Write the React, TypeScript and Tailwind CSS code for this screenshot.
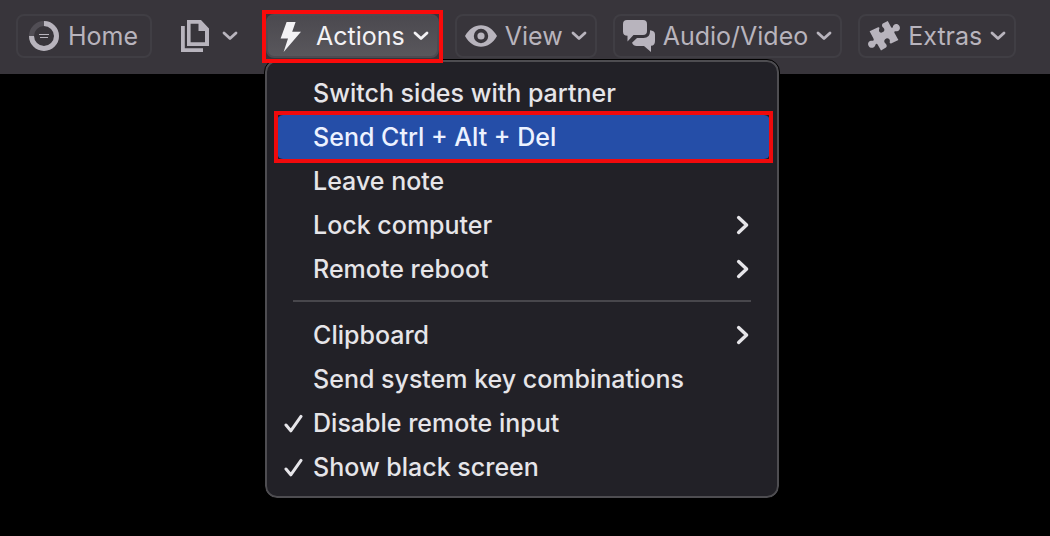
import { useState, type ReactNode } from "react";

function ChevronDown() {
  return (
    <svg viewBox="0 0 16 10" className="w-4 h-[10px] shrink-0" fill="none" stroke="currentColor" strokeWidth="2.8" strokeLinecap="round" strokeLinejoin="round">
      <path d="M2 2 L8 7.6 L14 2" />
    </svg>
  );
}

function ChevronRight() {
  return (
    <svg viewBox="0 0 14 20" className="w-[14px] h-5 shrink-0" fill="none" stroke="currentColor" strokeWidth="3.4" strokeLinecap="round" strokeLinejoin="round">
      <path d="M2.6 2.6 L10.6 10 L2.6 17.4" />
    </svg>
  );
}

function HomeIcon() {
  return (
    <svg viewBox="0 0 32 32" className="size-8 shrink-0" fill="none" stroke="currentColor">
      <circle cx="16" cy="16" r="12.5" strokeWidth="5" opacity="0.2" />
      <path d="M16 3.5 A12.5 12.5 0 1 1 3.5 16" strokeWidth="5" />
      <path d="M11 14.5 H21 M12 17.5 H20" strokeWidth="1" />
    </svg>
  );
}

function FilesIcon() {
  return (
    <svg viewBox="0 0 30 34" className="w-[30px] h-[34px] shrink-0" fill="currentColor">
      <path fillRule="evenodd" d="M7 1 H21 L29 9.5 V27 H7 Z M10.6 4.8 V23.2 H25 V12 H18.5 V4.8 Z" />
      <path d="M1 7 H4.8 V29.2 H23 V33 H1 Z" />
    </svg>
  );
}

function BoltIcon() {
  return (
    <svg viewBox="0 0 32 32" className="size-8 shrink-0" fill="currentColor">
      <path d="M10.6 2 H19.6 L16.2 11.8 H25 L7.6 32 L12 18.4 H4.6 Z" />
    </svg>
  );
}

function EyeIcon() {
  return (
    <svg viewBox="0 0 32 32" className="size-8 shrink-0" fill="currentColor">
      <path fillRule="evenodd" d="M0 16 C4 9 9.5 5.2 16 5.2 S28 9 32 16 C28 23 22.5 26.8 16 26.8 S4 23 0 16 Z M16 8.8 A7.2 7.2 0 1 0 16 23.2 A7.2 7.2 0 1 0 16 8.8 Z" />
      <circle cx="16" cy="16" r="3.6" />
    </svg>
  );
}

function ChatIcon() {
  return (
    <svg viewBox="0 0 32 32" className="size-8 shrink-0" fill="currentColor">
      <path d="M4 0 H20 Q24 0 24 4 V11 Q24 15 20 15 H10.5 L4.5 21.5 V15.8 Q0 15.8 0 11.5 V4 Q0 0 4 0 Z" />
      <path d="M27 10.2 Q32 10.5 32 14.5 V21 Q32 25.5 28 25.8 V32 L21 26 H13.5 Q10.5 26 9 22.8 L14 18 H20.5 Q27 18 27 11.5 Z" />
    </svg>
  );
}

function PuzzleIcon() {
  return (
    <svg viewBox="0 0 32 32" className="size-8 shrink-0" fill="currentColor">
      <path d="M1.6 11.2 L9.6 7.4 C11.2 6.8 11.8 7.6 11.2 9 C10.4 11 11.6 12.9 13.8 12.6 C16.4 12.2 17.2 9.4 15.4 7.8 C14 6.6 13.4 4.6 14.8 3.6 L19.8 1 L23 7 C23.8 8.4 24.8 8 25 6.6 C25.4 4.4 27.8 3.4 30 4.6 C32.4 6 32.6 9.4 30.4 10.8 C28.8 11.8 27.4 11 26.6 11.6 C26 12 26.4 12.8 26.8 13.6 L30.4 20 L23.6 23.2 C22 23.8 21.4 23 21.8 21.4 C22.2 19.4 20.4 17.8 18.4 18.4 C16 19.2 15.6 21.8 17.2 23.2 C18.6 24.4 19.4 26.2 18 27.4 L13 30.4 L9.6 24.6 C8.8 23.2 7.8 23.6 7.4 25 C6.8 27.4 4.2 28.6 2 27.4 C-0.4 26 -0.6 22.6 1.6 21.2 C3.2 20.2 4.6 21 5.4 20.4 C6 20 5.8 19.2 5.2 18 Z" />
    </svg>
  );
}

function CheckMark() {
  return (
    <svg viewBox="0 0 20 20" className="size-5 shrink-0 opacity-0 peer-checked:opacity-100" fill="none" stroke="currentColor" strokeWidth="3" strokeLinecap="round" strokeLinejoin="round">
      <path d="M3 12 L7.8 17.8 L18 3.4" />
    </svg>
  );
}

function ToolbarButton({ icon, label }: { icon: ReactNode; label: string }) {
  return (
    <button type="button" className="flex h-11 shrink-0 items-center gap-2 rounded-lg border-2 border-[#403e44] px-2">
      {icon}
      <span>{label}</span>
      <ChevronDown />
    </button>
  );
}

function MenuItem({ label, submenu = false }: { label: string; submenu?: boolean }) {
  return (
    <button type="button" role="menuitem" className="flex h-11 w-full items-center justify-between rounded-md pl-9 pr-5 text-left">
      <span>{label}</span>
      {submenu && <ChevronRight />}
    </button>
  );
}

function CheckItem({ label }: { label: string }) {
  const [checked, setChecked] = useState(true);

  return (
    <label className="flex h-11 w-full items-center gap-2.5 pl-1.5">
      <input type="checkbox" className="peer sr-only" checked={checked} onChange={() => setChecked(!checked)} />
      <CheckMark />
      <span>{label}</span>
    </label>
  );
}

function ActionsMenu() {
  return (
    <div role="menu" className="absolute -left-px top-[46px] w-[514px] rounded-xl border-2 border-[#4e4d51] bg-[#222127] pl-2.5 pr-[7px] pt-[9px] pb-[7px] font-medium text-[#e6e5e9] outline outline-black">
      <MenuItem label="Switch sides with partner" />
      <div className="relative">
        <button type="button" role="menuitem" className="flex h-11 w-full items-center rounded-md bg-[#254ea8] pl-9 text-left text-[#edf2ff]">
          Send Ctrl + Alt + Del
        </button>
        <div className="pointer-events-none absolute -inset-x-[3px] -inset-y-1 border-4 border-[#f00a0c]" />
      </div>
      <MenuItem label="Leave note" />
      <MenuItem label="Lock computer" submenu />
      <MenuItem label="Remote reboot" submenu />
      <hr className="ml-4 mr-[19px] mt-[9px] mb-[11px] border-t-2 border-[#48474c]" />
      <MenuItem label="Clipboard" submenu />
      <MenuItem label="Send system key combinations" />
      <CheckItem label="Disable remote input" />
      <CheckItem label="Show black screen" />
    </div>
  );
}

export default function App() {
  return (
    <div className="min-h-screen overflow-hidden bg-black font-['Inter',sans-serif] text-[25px] leading-8">
      <header className="flex h-[74px] items-start gap-4 bg-[#38353b] px-4 pt-3.5 text-[#b8b4bd]">
        <button type="button" className="flex h-11 shrink-0 items-center gap-2 rounded-lg border-2 border-[#403e44] pl-2.5 pr-3">
          <HomeIcon />
          <span>Home</span>
        </button>
        <button type="button" aria-label="Files" className="flex h-11 shrink-0 items-center gap-3 px-3">
          <FilesIcon />
          <ChevronDown />
        </button>
        <div className="relative z-10 shrink-0">
          <button type="button" aria-expanded="true" className="flex h-11 items-center gap-2 rounded-lg border-2 border-[#4d4b51] bg-linear-to-b from-[#4b494f] to-[#59575c] px-2 text-[#f3f2f5]">
            <BoltIcon />
            <span>Actions</span>
            <ChevronDown />
          </button>
          <ActionsMenu />
          <div className="pointer-events-none absolute -inset-1 -bottom-[5px] border-4 border-[#fa0a0a]" />
        </div>
        <ToolbarButton icon={<EyeIcon />} label="View" />
        <ToolbarButton icon={<ChatIcon />} label="Audio/Video" />
        <ToolbarButton icon={<PuzzleIcon />} label="Extras" />
      </header>
    </div>
  );
}
